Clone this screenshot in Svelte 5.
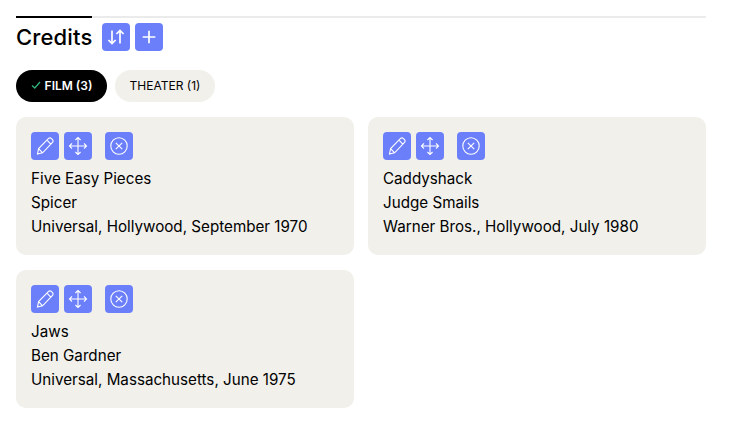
<script>
    const credits = [
        { title: 'Five Easy Pieces', role: 'Spicer', place: 'Universal, Hollywood, September 1970' },
        { title: 'Caddyshack', role: 'Judge Smails', place: 'Warner Bros., Hollywood, July 1980' },
        { title: 'Jaws', role: 'Ben Gardner', place: 'Universal, Massachusetts, June 1975' }
    ];
</script>

<main>
    <div class="heading">
        <h2>Credits</h2>
        <div class="tools">
            <button class="icon" aria-label="Sort">
                <svg viewBox="0 0 20 20"><path d="M6 3.5v13M2.4 13 6 16.6 9.6 13M14 16.5v-13M10.4 7 14 3.4 17.6 7" /></svg>
            </button>
            <button class="icon" aria-label="Add">
                <svg viewBox="0 0 20 20"><path d="M10 3.7v12.6M3.7 10h12.6" /></svg>
            </button>
        </div>
    </div>

    <div class="tabs">
        <button class="tab active">
            <svg class="check" viewBox="0 0 10 10"><path d="M1 5.5 3.8 8 9 2" /></svg>
            FILM (3)
        </button>
        <button class="tab">THEATER (1)</button>
    </div>

    <div class="cards">
        {#each credits as credit}
            <div class="card">
                <div class="actions">
                    <button class="icon" aria-label="Edit">
                        <svg class="thin" viewBox="0 0 20 20"><path d="M2.5 18 3.6 12.6 13.6 2.4a1.9 1.9 0 0 1 2.7 0l1.2 1.2a1.9 1.9 0 0 1 0 2.7L7.6 16.8Zm1.1-5.4 4 4.2M12 4.2l3.8 3.9" /></svg>
                    </button>
                    <button class="icon" aria-label="Move">
                        <svg class="thin" viewBox="0 0 20 20"><path d="M10 1.5v17M1.5 10h17M7.4 4 10 1.5 12.6 4M7.4 16 10 18.5 12.6 16M4 7.4 1.5 10 4 12.6M16 7.4 18.5 10 16 12.6" /></svg>
                    </button>
                    <button class="icon remove" aria-label="Remove">
                        <svg class="thin" viewBox="0 0 20 20"><circle cx="10" cy="10" r="8.2" /><path d="M6.8 6.8l6.4 6.4M13.2 6.8l-6.4 6.4" /></svg>
                    </button>
                </div>
                <div>{credit.title}</div>
                <div>{credit.role}</div>
                <div>{credit.place}</div>
            </div>
        {/each}
    </div>
</main>

<style>
    :global(body) {
        background: #fff;
        color: #000;
        font-family: "Inter", "Liberation Sans", sans-serif;
    }

    main {
        width: 690px;
        padding: 16px 0 0 16px;
    }

    .heading {
        display: flex;
        border-top: 2px solid #ebebeb;
        position: relative;
        gap: 10px;
        padding-top: 5px;
    }

    .heading::before {
        content: "";
        position: absolute;
        top: -2px;
        left: 0;
        width: 76px;
        height: 2px;
        background: #000;
    }

    h2 {
        margin: 0;
        width: 76px;
        font-size: 22px;
        font-weight: 500;
        letter-spacing: 0.15px;
        line-height: 28px;
    }

    .tools, .actions {
        display: flex;
        gap: 5px;
    }

    button {
        font-family: inherit;
        border: none;
        padding: 0;
        cursor: pointer;
    }

    .icon {
        display: flex;
        align-items: center;
        justify-content: center;
        width: 28px;
        height: 28px;
        background: #6b7ffb;
        border-radius: 4px;
    }

    .icon svg {
        width: 20px;
        height: 20px;
        fill: none;
        stroke: #fff;
        stroke-width: 1.7;
    }

    .icon svg.thin {
        stroke-width: 1.1;
    }

    .remove {
        margin-left: 8px;
    }

    .tabs {
        display: flex;
        gap: 8px;
        margin-top: 19px;
    }

    .tab {
        display: flex;
        align-items: center;
        gap: 4px;
        width: 100px;
        justify-content: center;
        height: 32px;
        padding-bottom: 2px;
        border-radius: 16px;
        background: #f1f0eb;
        color: #000;
        font-size: 12px;
        font-weight: 400;
    }

    .tab.active {
        width: 91px;
        background: #000;
        color: #fff;
        font-weight: 600;
    }

    .check {
        width: 10px;
        height: 10px;
        fill: none;
        stroke: #2fb37c;
        stroke-width: 1.3;
    }

    .cards {
        display: grid;
        grid-template-columns: 338px 338px;
        column-gap: 14px;
        row-gap: 15px;
        margin-top: 15px;
    }

    .card {
        height: 138px;
        box-sizing: border-box;
        padding: 15px;
        background: #f1f0eb;
        border-radius: 10px;
        font-size: 15.2px;
        line-height: 24px;
    }

    .actions {
        margin-bottom: 7px;
    }
</style>
